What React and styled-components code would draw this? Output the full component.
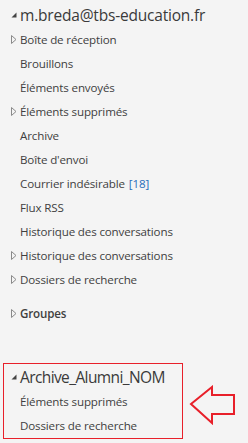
import React from "react";
import styled, { createGlobalStyle } from "styled-components";

const GlobalStyle = createGlobalStyle`
  html, body {
    margin: 0;
    padding: 0;
    background: #f4f4f4;
  }
  body {
    font-family: "Open Sans", "Noto Sans", "Liberation Sans", sans-serif;
  }
`;

const Pane = styled.div`
  width: 248px;
  height: 443px;
  background: #f4f4f4;
  padding-top: 3px;
  box-sizing: border-box;
  overflow: hidden;
  color: #444;
`;

const Row = styled.div`
  height: 24px;
  display: flex;
  align-items: center;
  padding-left: ${(p) => p.$indent || 11}px;
  white-space: nowrap;
`;

const Twisty = styled.span`
  width: 9px;
  height: 24px;
  display: flex;
  align-items: center;
  flex-shrink: 0;
`;

const AccountName = styled.span`
  font-size: 15.5px;
  font-weight: 400;
  color: #3a3a3a;
  letter-spacing: ${(p) => (p.$tight ? "-0.6px" : "-0.2px")};
`;

const FolderName = styled.span`
  font-size: 11.6px;
  color: #3f3f3f;
  letter-spacing: -0.15px;
  font-weight: ${(p) => (p.$bold ? 600 : 400)};
`;

const Count = styled.span`
  color: #2a6ebb;
  margin-left: 4px;
`;

const GroupRow = styled(Row)`
  margin-top: 10px;
`;

const Section = styled.div`
  position: relative;
  margin-top: 38px;
`;

const Highlight = styled.div`
  margin-left: 3px;
  width: 180px;
  box-sizing: border-box;
  border: 1px solid #e8202a;
  padding: 1px 0;
`;

const Arrow = styled.svg`
  position: absolute;
  left: 188px;
  top: 22px;
`;

const Expanded = () => (
  <Twisty>
    <svg width="6" height="6" viewBox="0 0 6 6">
      <polygon points="5.5,0.5 5.5,5.5 0.5,5.5" fill="#444" />
    </svg>
  </Twisty>
);

const Collapsed = () => (
  <Twisty>
    <svg width="6" height="9" viewBox="0 0 6 9">
      <polygon points="0.5,0.5 5,4.5 0.5,8.5" fill="none" stroke="#8a8a8a" strokeWidth="1" />
    </svg>
  </Twisty>
);

const Blank = () => <Twisty />;

const folders = [
  { name: "Boîte de réception", sub: true },
  { name: "Brouillons" },
  { name: "Éléments envoyés" },
  { name: "Éléments supprimés", sub: true },
  { name: "Archive" },
  { name: "Boîte d'envoi" },
  { name: "Courrier indésirable", count: 18 },
  { name: "Flux RSS" },
  { name: "Historique des conversations" },
  { name: "Historique des conversations", sub: true },
  { name: "Dossiers de recherche", sub: true },
];

export default function App() {
  return (
    <>
      <GlobalStyle />
      <Pane>
        <Row>
          <Expanded />
          <AccountName>m.breda@tbs-education.fr</AccountName>
        </Row>
        {folders.map((f, i) => (
          <Row key={i}>
            {f.sub ? <Collapsed /> : <Blank />}
            <FolderName>
              {f.name}
              {f.count && <Count>[{f.count}]</Count>}
            </FolderName>
          </Row>
        ))}
        <GroupRow>
          <Collapsed />
          <FolderName $bold>Groupes</FolderName>
        </GroupRow>

        <Section>
          <Highlight>
            <Row $indent={7}>
              <Expanded />
              <AccountName $tight>Archive_Alumni_NOM</AccountName>
            </Row>
            <Row $indent={7}>
              <Blank />
              <FolderName>Éléments supprimés</FolderName>
            </Row>
            <Row $indent={7}>
              <Blank />
              <FolderName>Dossiers de recherche</FolderName>
            </Row>
          </Highlight>
          <Arrow width="50" height="40" viewBox="0 0 50 40">
            <polygon
              points="3,19 24,2 24,10 46,10 46,29 24,29 24,38"
              fill="none"
              stroke="#e8202a"
              strokeWidth="2"
              strokeLinejoin="miter"
            />
          </Arrow>
        </Section>
      </Pane>
    </>
  );
}
